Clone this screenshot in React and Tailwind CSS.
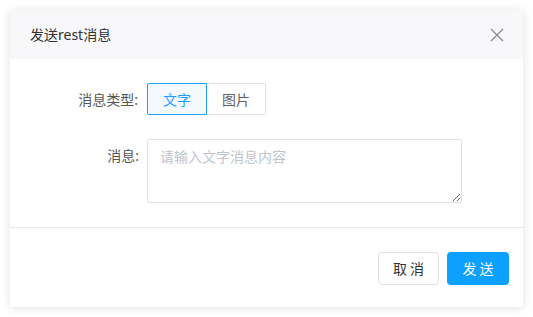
import React from 'react';

const font = { fontFamily: '"Noto Sans", "Noto Sans CJK SC", sans-serif' };

const CloseIcon = () => (
  <svg width="14" height="14" viewBox="0 0 14 14" fill="none" stroke="#8a8d93" strokeWidth="1.4">
    <path d="M1 1L13 13M13 1L1 13" />
  </svg>
);

export default function App() {
  const [type, setType] = React.useState('text');
  return (
    <div className="w-[533px] h-[317px] bg-white pt-[10px] pl-[10px]" style={font}>
      <div className="w-[513px] h-[297px] bg-white rounded-[3px] shadow-[0_1px_10px_rgba(0,0,0,0.12)] flex flex-col overflow-hidden">
        <div className="h-[49px] bg-[#f8f8fa] flex items-center justify-between pl-5 pr-[19px]">
          <span className="text-[14px] text-[#303133]">发送rest消息</span>
          <CloseIcon />
        </div>
        <div className="flex flex-col gap-6 pt-6 pb-6 border-b border-[#e8e9ee]">
          <div className="flex items-center">
            <label className="w-[137px] pr-[9px] text-right text-[14px] text-[#555]">消息类型:</label>
            <div className="flex">
              <button
                onClick={() => setType('text')}
                className={`w-[60px] h-[32px] text-[14px] rounded-l-[2px] border ${type === 'text' ? 'border-[#1ea0ff] bg-[#f4f9ff] text-[#1e9fff]' : 'border-[#dcdfe6] text-[#606266]'}`}
              >
                文字
              </button>
              <button
                onClick={() => setType('img')}
                className={`w-[59px] h-[32px] text-[14px] rounded-r-[2px] border border-l-0 ${type === 'img' ? 'border-[#1ea0ff] bg-[#f4f9ff] text-[#1e9fff]' : 'border-[#dcdfe6] text-[#606266]'}`}
              >
                图片
              </button>
            </div>
          </div>
          <div className="flex items-start">
            <label className="w-[137px] pr-[8px] pt-[6px] leading-[22px] text-right text-[14px] text-[#555]">消息:</label>
            <textarea
              placeholder="请输入文字消息内容"
              className="w-[315px] h-[64px] border border-[#dcdfe6] rounded-[2px] px-3 py-[6px] text-[14px] leading-[22px] text-[#606266] placeholder:text-[#c0c4cc] outline-none"
            />
          </div>
        </div>
        <div className="flex justify-end gap-2 pt-6 pr-[14px]">
          <button className="w-[61px] h-[33px] border border-[#dcdfe6] rounded-[4px] text-[14px] text-[#333] tracking-[3px] pl-[3px]">取消</button>
          <button className="w-[62px] h-[33px] bg-[#0ea0fe] rounded-[4px] text-[14px] text-white tracking-[3px] pl-[3px]">发送</button>
        </div>
      </div>
    </div>
  );
}
